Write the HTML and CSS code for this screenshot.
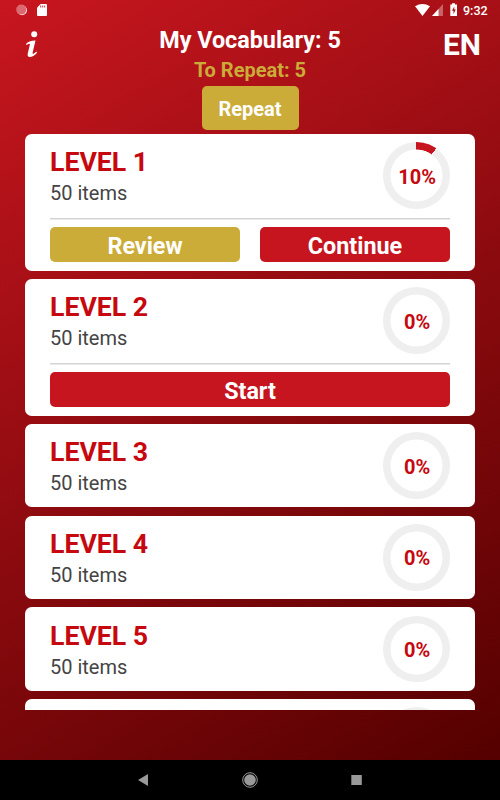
FILE: index.html
```html
<!DOCTYPE html>
<html lang="en">
<head>
<meta charset="utf-8">
<title>My Vocabulary</title>
<link rel="stylesheet" href="styles.css">
</head>
<body>
<div class="screen">
  <div class="status">
    <svg class="status-left" width="50" height="20" viewBox="0 0 50 20">
      <circle cx="22" cy="10.2" r="5" fill="#fff" opacity=".9"/>
      <circle cx="21.2" cy="9.6" r="5" fill="#dc6970"/>
      <path d="M37 7.8 40.6 4H46a1 1 0 0 1 1 1v10a1 1 0 0 1-1 1h-8a1 1 0 0 1-1-1z" fill="#fff"/>
      <path d="M40.7 5.5v2M42.7 5.5v2M44.7 5.5v2" stroke="#c8323a" stroke-width="1"/>
    </svg>
    <svg class="status-right" width="44" height="20" viewBox="0 0 44 20">
      <path d="M0 6.3Q7.500 1.700 15 6.300L7.500 16z" fill="#fff"/>
      <path d="M17 16 28 4v12z" fill="#fff" opacity=".35"/>
      <path d="M17 16 23.500 9v7z" fill="#fff"/>
      <path d="M35.300 4.500h1.700V3.300h3v1.200h2V16h-6.700z" fill="#fff"/>
      <path d="M39.300 6.500 37 10.700h1.500v3.200l2.300-4.500h-1.500z" fill="#a31018"/>
    </svg>
    <span class="clock">9:32</span>
  </div>
  <header class="header">
    <svg class="info" width="14" height="28" viewBox="0 0 14 28">
      <circle cx="9.200" cy="4.300" r="3" fill="#fff"/>
      <path d="M1 13.900Q3.500 10.800 10.500 10.500L7.600 22.700Q7.300 24.200 8.500 23.700L11.700 21.600 12 22.700Q8.200 27 4.700 27 2 26.700 2.800 23.200L4.900 14.600Q5 13.500 3.900 13.800L1.400 15z" fill="#fff"/>
    </svg>
    <div class="summary">
      <h1>My Vocabulary: 5</h1>
      <p class="due">To Repeat: 5</p>
      <button class="repeat">Repeat</button>
    </div>
    <span class="lang">EN</span>
  </header>
  <main class="levels">
    <section class="card">
      <div class="info-row">
        <div><h2>LEVEL 1</h2><p class="items">50 items</p></div>
        <div class="ring started"><span>10%</span></div>
      </div>
      <div class="actions"><button class="gold">Review</button><button>Continue</button></div>
    </section>
    <section class="card">
      <div class="info-row">
        <div><h2>LEVEL 2</h2><p class="items">50 items</p></div>
        <div class="ring"><span>0%</span></div>
      </div>
      <div class="actions"><button>Start</button></div>
    </section>
    <section class="card">
      <div class="info-row">
        <div><h2>LEVEL 3</h2><p class="items">50 items</p></div>
        <div class="ring"><span>0%</span></div>
      </div>
    </section>
    <section class="card">
      <div class="info-row">
        <div><h2>LEVEL 4</h2><p class="items">50 items</p></div>
        <div class="ring"><span>0%</span></div>
      </div>
    </section>
    <section class="card">
      <div class="info-row">
        <div><h2>LEVEL 5</h2><p class="items">50 items</p></div>
        <div class="ring"><span>0%</span></div>
      </div>
    </section>
    <section class="card">
      <div class="info-row"><div></div><div class="ring"></div></div>
    </section>
  </main>
  <nav class="navbar">
    <svg width="240" height="40" viewBox="0 0 240 40">
      <path d="M8 20 18 14v12z" fill="#999"/>
      <circle cx="120" cy="20" r="7.300" fill="none" stroke="#999" stroke-width="1"/>
      <circle cx="120" cy="20" r="5.800" fill="#999"/>
      <path d="M221.300 15h10.500v10h-10.500z" fill="#999"/>
    </svg>
  </nav>
</div>
</body>
</html>
```

FILE: styles.css
```css
* { box-sizing: border-box; }
body { margin: 0; font-family: Roboto, sans-serif; }
h1, h2, p { margin: 0; }
button { border: 0; padding: 0; font-family: inherit; color: #fff; background: #c6151e; font-weight: 700; }

.screen {
  width: 500px;
  height: 800px;
  display: flex;
  flex-direction: column;
  overflow: hidden;
  background: linear-gradient(148deg, #c8161f, #550000 96%);
}

.status { display: flex; height: 20px; }
.status-left { flex: none; }
.status-right { margin-left: auto; }
.clock {
  width: 41px;
  padding-left: 4px;
  color: #fff;
  font-size: 12.5px;
  font-weight: 500;
  line-height: 21px;
}

.header {
  display: grid;
  grid-template-columns: 1fr auto 1fr;
  align-items: start;
  height: 114px;
  padding: 0 19px 0 25px;
  color: #fff;
}
.info { margin-top: 10px; }
.summary { display: flex; flex-direction: column; align-items: center; margin-left: -6px; }
h1 { font-size: 23.33px; line-height: 28px; padding-top: 6px; font-weight: 700; }
.due { color: #cbac38; font-size: 20px; line-height: 24px; margin-top: 4px; font-weight: 700; }
.repeat {
  width: 97px;
  height: 44px;
  margin-top: 4px;
  padding-top: 2px;
  border-radius: 5px;
  background: #cbac38;
  font-size: 20px;
}
.lang { justify-self: end; font-size: 30px; line-height: 36px; padding-top: 7px; font-weight: 700; }

.levels {
  height: 576px;
  padding: 0.17px 25px 0;
  display: flex;
  flex-direction: column;
  gap: 8.33px;
  overflow: hidden;
}
.card { flex: none; background: #fff; border-radius: 6.67px; padding: 0 25px; }
.info-row { height: 83.33px; display: flex; justify-content: space-between; align-items: center; }
h2 { color: #c6080f; font-size: 26.67px; line-height: 31px; font-weight: 700; padding-top: 1px; }
.items { color: #444; font-size: 20px; line-height: 24px; margin-top: 3px; }
.ring {
  width: 66.67px;
  height: 66.67px;
  padding: 2px 0 0 1px;
  border-radius: 50%;
  display: flex;
  align-items: center;
  justify-content: center;
  color: #c6080f;
  font-size: 20px;
  font-weight: 700;
  background: radial-gradient(closest-side, #fff 76.5%, transparent 78.5%), #efefef;
}
.ring.started {
  background: radial-gradient(closest-side, #fff 76.5%, transparent 78.5%), conic-gradient(#c6151e 10%, #efefef 10%);
}
.actions { height: 53.33px; padding-top: 10px; display: flex; gap: 20px; background: linear-gradient(#d4d4d4, #d4d4d4) 0 0.5px / 100% 1.5px no-repeat; }
.actions button { flex: 1; height: 35px; border-radius: 5px; padding-top: 2px; font-size: 23.33px; }
.actions .gold { background: #cbac38; }

.navbar { height: 40px; margin-top: auto; background: #000; display: flex; justify-content: center; }
```
